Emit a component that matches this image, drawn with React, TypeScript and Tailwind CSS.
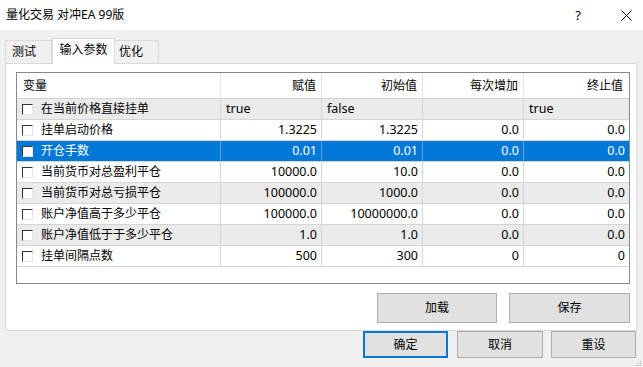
import React from "react";

type Row = { name: string; v: string[]; left?: boolean; sel?: boolean };

const rows: Row[] = [
  { name: "在当前价格直接挂单", v: ["true", "false", "", "true"], left: true },
  { name: "挂单启动价格", v: ["1.3225", "1.3225", "0.0", "0.0"] },
  { name: "开仓手数", v: ["0.01", "0.01", "0.0", "0.0"], sel: true },
  { name: "当前货币对总盈利平仓", v: ["10000.0", "10.0", "0.0", "0.0"] },
  { name: "当前货币对总亏损平仓", v: ["100000.0", "1000.0", "0.0", "0.0"] },
  { name: "账户净值高于多少平仓", v: ["100000.0", "10000000.0", "0.0", "0.0"] },
  { name: "账户净值低于于多少平仓", v: ["1.0", "1.0", "0.0", "0.0"] },
  { name: "挂单间隔点数", v: ["500", "300", "0", "0"] },
];

function Check() {
  return (
    <span className="inline-block w-[11px] h-[11px] shrink-0 bg-white border border-t-[#333333] border-l-[#333333] border-r-[#e6e6e6] border-b-[#e6e6e6]" />
  );
}

export default function App() {
  return (
    <div className="w-[643px] h-[367px] bg-[#f0f0f0] flex flex-col overflow-hidden text-[12px] text-black font-['Noto_Sans','Noto_Sans_CJK_SC',sans-serif] leading-none">
      {/* title bar */}
      <div className="h-[30px] bg-white flex items-center pl-[6px] shrink-0">
        <span className="text-[12px]">量化交易 对冲EA 99版</span>
        <div className="flex-1" />
        <span className="text-[13px] mr-[40px]">?</span>
        <svg width="11" height="11" viewBox="0 0 11 11" className="mr-[11px]">
          <path d="M0.5 0.5 L10.5 10.5 M10.5 0.5 L0.5 10.5" stroke="#000" strokeWidth="1" fill="none" />
        </svg>
      </div>

      {/* tabs */}
      <div className="mt-[8px] pl-[5px] flex items-end h-[25px] shrink-0">
        <div className="w-[47px] h-[23px] border border-b-0 border-[#d9d9d9] bg-[#f0f0f0] flex items-center pl-[6px]">测试</div>
        <div className="relative z-10 w-[63px] h-[26px] -mb-[1px] border border-b-0 border-[#d9d9d9] bg-white flex items-center justify-center pb-[3px]">输入参数</div>
        <div className="w-[44px] h-[23px] border border-b-0 border-l-0 border-[#d9d9d9] bg-[#f0f0f0] flex items-center pl-[4px]">优化</div>
      </div>

      {/* panel */}
      <div className="ml-[5px] w-[632px] h-[268px] border border-[#d9d9d9] bg-white pl-[10px] pt-[8px] shrink-0">
        <div className="w-[614px] h-[212px] border border-[#828790] bg-white">
          <div className="grid grid-cols-[204px_101px_101px_101px_1fr]">
            {/* header */}
            <div className="h-[26px] border-b border-r border-b-[#d5d5d5] border-r-[#e5e5e5] flex items-center pl-[6px]">变量</div>
            <div className="h-[26px] border-b border-r border-b-[#d5d5d5] border-r-[#e5e5e5] flex items-center justify-end pr-[5px]">赋值</div>
            <div className="h-[26px] border-b border-r border-b-[#d5d5d5] border-r-[#e5e5e5] flex items-center justify-end pr-[5px]">初始值</div>
            <div className="h-[26px] border-b border-r border-b-[#d5d5d5] border-r-[#e5e5e5] flex items-center justify-end pr-[5px]">每次增加</div>
            <div className="h-[26px] border-b border-b-[#d5d5d5] flex items-center justify-end pr-[6px]">终止值</div>
            {rows.map((r, i) => {
              const bg = r.sel ? "bg-[#0078d7] text-white" : i % 2 === 0 ? "bg-[#ebebeb]" : "bg-white";
              const sep = r.sel ? "border-r-[#5aa5e6]" : "border-r-[#d5d5d5]";
              return (
                <React.Fragment key={i}>
                  <div className={`h-[21px] border-b border-b-[#d5d5d5] border-r ${sep} ${bg} flex items-center pl-[5px] gap-[8px]`}>
                    <Check />
                    <span>{r.name}</span>
                  </div>
                  {r.v.map((val, j) => (
                    <div
                      key={j}
                      className={`h-[21px] border-b border-b-[#d5d5d5] ${j < 3 ? "border-r " + sep : ""} ${bg} flex items-center ${r.left ? "justify-start pl-[5px]" : "justify-end pr-[4px]"} text-[12.5px]`}
                    >
                      {val}
                    </div>
                  ))}
                </React.Fragment>
              );
            })}
          </div>
        </div>
        <div className="flex justify-end pr-[6px] mt-[9px] gap-[12px]">
          <button className="w-[120px] h-[30px] bg-[#e1e1e1] border border-[#adadad] text-[12px]">加载</button>
          <button className="w-[121px] h-[30px] bg-[#e1e1e1] border border-[#adadad] text-[12px]">保存</button>
        </div>
      </div>

      {/* bottom buttons */}
      <div className="flex justify-end pr-[7px] mt-0 relative">
        <button className="w-[85px] h-[27px] bg-[#e1e1e1] border-2 border-[#0078d7] text-[12px]">确定</button>
        <button className="ml-[9px] w-[86px] h-[27px] bg-[#e1e1e1] border border-[#adadad] text-[12px]">取消</button>
        <button className="ml-[8px] w-[85px] h-[27px] bg-[#e1e1e1] border border-[#adadad] text-[12px]">重设</button>
        <svg width="7" height="7" viewBox="0 0 7 7" className="absolute right-[1px] top-[29px]">
          <rect x="5" y="1" width="1" height="1" fill="#b0b0b0" />
          <rect x="3" y="3" width="1" height="1" fill="#b0b0b0" />
          <rect x="5" y="3" width="1" height="1" fill="#b0b0b0" />
          <rect x="1" y="5" width="1" height="1" fill="#b0b0b0" />
          <rect x="3" y="5" width="1" height="1" fill="#b0b0b0" />
          <rect x="5" y="5" width="1" height="1" fill="#b0b0b0" />
        </svg>
      </div>
    </div>
  );
}
